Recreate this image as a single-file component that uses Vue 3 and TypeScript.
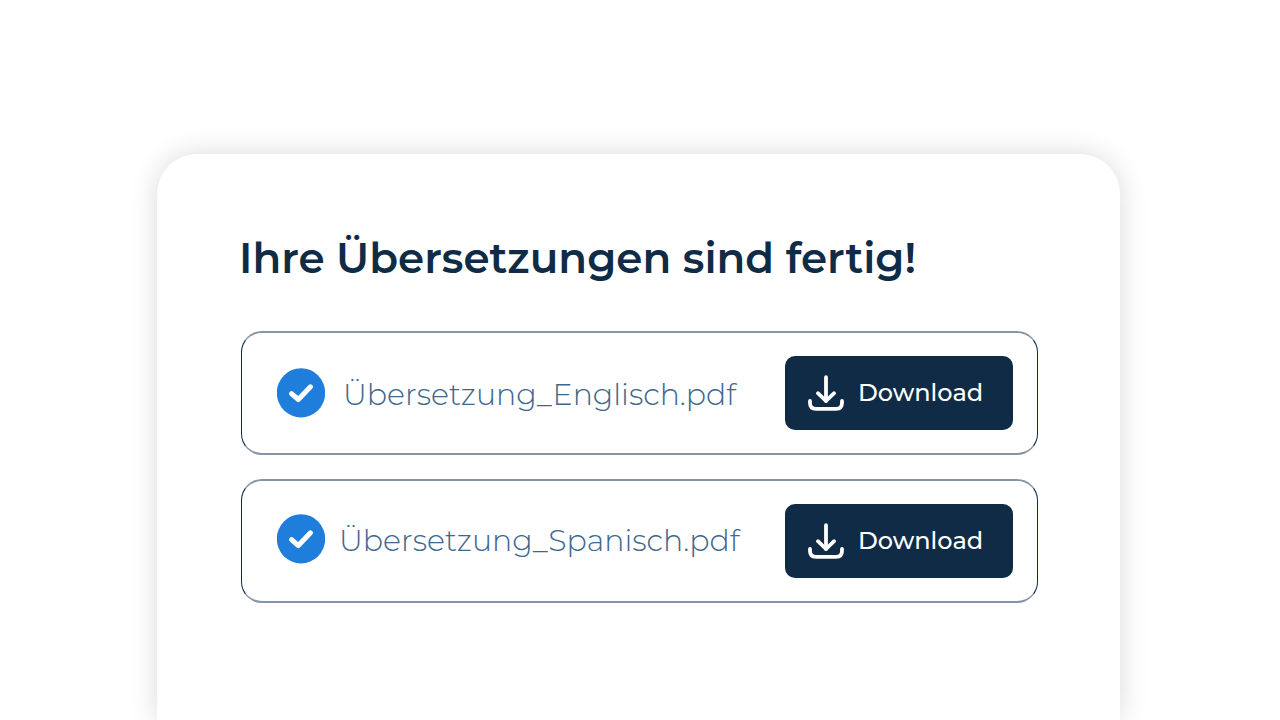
<script setup lang="ts">
interface Translation {
  name: string
  variant: string
}

const translations: Translation[] = [
  { name: 'Übersetzung_Englisch.pdf', variant: 'english' },
  { name: 'Übersetzung_Spanisch.pdf', variant: 'spanish' },
]
</script>

<template>
  <main class="page">
    <section class="card">
      <h1 class="title">Ihre Übersetzungen sind fertig!</h1>
      <ul class="files">
        <li v-for="file in translations" :key="file.name" class="file" :class="file.variant">
          <div class="info">
            <svg class="check" viewBox="0 0 48 50" aria-hidden="true">
              <ellipse cx="24" cy="24.8" rx="24.2" ry="24.6" fill="#1f7edb" />
              <path d="M14.5 25.6 L21.3 31.5 L33.5 18.8" fill="none" stroke="#fff" stroke-width="5" stroke-linecap="round" stroke-linejoin="round" />
            </svg>
            <span class="name">{{ file.name }}</span>
          </div>
          <button type="button" class="download">
            <svg class="arrow" viewBox="0 0 36 36" aria-hidden="true">
              <g fill="none" stroke="#fff" stroke-width="3.8" stroke-linecap="round" stroke-linejoin="round">
                <path d="M18 2.2 V26" />
                <path d="M9.9 18.2 L18 26 L26.1 18.2" />
                <path d="M2 26 V28 C2 31.5 4 33.8 8 33.8 H28 C32 33.8 34 31.5 34 28 V26" />
              </g>
            </svg>
            <span class="label">Download</span>
          </button>
        </li>
      </ul>
    </section>
  </main>
</template>

<style>
body {
  margin: 0;
  background: #fff;
}
</style>

<style scoped>
.page {
  box-sizing: border-box;
  min-height: 100vh;
  padding: 154px 160px 0 157px;
  display: flex;
  overflow: hidden;
  background: #fff;
  font-family: Montserrat, Inter, "Open Sans", sans-serif;
  color: #102b46;
}

.card {
  box-sizing: border-box;
  flex: 1;
  min-width: 0;
  padding: 78px 82px 0 84px;
  border-radius: 40px 40px 0 0;
  background: #fff;
  box-shadow: 0 0 28px rgba(0, 0, 0, 0.15);
}

.title {
  margin: 0 0 47px -2px;
  font-size: 42px;
  line-height: 52px;
  font-weight: 600;
  white-space: nowrap;
}

.files {
  margin: 0;
  padding: 0;
  list-style: none;
  display: flex;
  flex-direction: column;
  gap: 24px;
}

.file {
  display: flex;
  align-items: center;
  justify-content: space-between;
  padding: 23px 24px 23px 35px;
  border: 1px solid #102b46;
  border-width: 2px 1px;
  border-color: #8595a6 #102b46;
  border-radius: 21px;
}

.info {
  display: flex;
  align-items: center;
  gap: 18px;
}

.spanish .info {
  gap: 14px;
  padding-bottom: 4px;
}

.check {
  width: 48px;
  height: 50px;
  flex: none;
}

.name {
  padding-top: 4px;
  font-size: 30px;
  line-height: 40px;
  font-weight: 300;
  color: #40678d;
  white-space: nowrap;
}

.download {
  box-sizing: border-box;
  width: 228px;
  height: 74px;
  padding: 0 0 0 23px;
  display: flex;
  align-items: center;
  gap: 14px;
  border: 0;
  border-radius: 10px;
  background: #102b46;
  color: #fff;
  font-family: inherit;
  font-size: 24px;
  font-weight: 500;
  cursor: pointer;
}

.label {
  padding-bottom: 2px;
}

.arrow {
  width: 36px;
  height: 36px;
  flex: none;
}
</style>
